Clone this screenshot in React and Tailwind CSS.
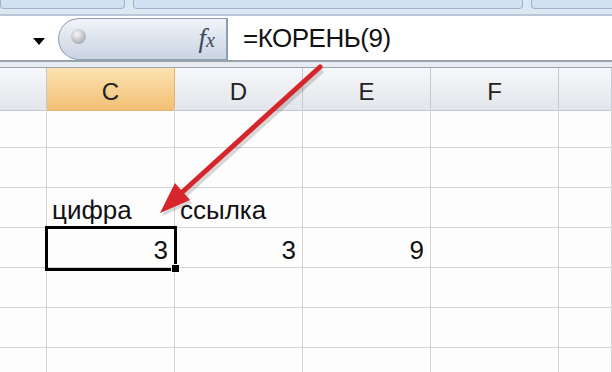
import React from "react";

const cols = ["B", "C", "D", "E", "F", "G"];

const rows = [
  ["", "", "", "", "", ""],
  ["", "", "", "", "", ""],
  ["", "цифра", "ссылка", "", "", ""],
  ["", "3", "3", "9", "", ""],
  ["", "", "", "", "", ""],
  ["", "", "", "", "", ""],
  ["", "", "", "", "", ""],
];

const Cell = ({ value }) => {
  const isNum = value !== "" && !isNaN(Number(value));
  return (
    <div
      className={
        "h-[40px] border-r border-b border-[#d4d4d4] flex items-end pb-[4px] text-[26px] leading-none text-[#111] overflow-visible whitespace-nowrap " +
        (isNum ? "justify-end pr-[6px]" : "justify-start pl-[5px]")
      }
    >
      {value}
    </div>
  );
};

const App = () => {
  return (
    <div className="relative w-[612px] h-[372px] overflow-hidden bg-[#fdfdfd] font-['Liberation_Sans',Arial,sans-serif]">
      {/* top ribbon strip */}
      <div className="h-[16px] bg-[#dce7f4] flex gap-[8px] border-b-2 border-[#b8c6d8]">
        <div className="w-[125px] h-[9px] bg-[#d3e0f1] border border-t-0 border-[#9fb2ca] rounded-b-[4px]" />
        <div className="w-[390px] h-[9px] bg-[#d3e0f1] border border-t-0 border-[#9fb2ca] rounded-b-[4px]" />
        <div className="flex-1 h-[9px] bg-[#d3e0f1] border border-t-0 border-r-0 border-[#9fb2ca] rounded-bl-[4px]" />
      </div>

      {/* formula bar */}
      <div className="h-[46px] flex bg-white border-b-2 border-[#98a3b0]">
        <div className="w-[58px] flex items-center justify-end pr-[13px] pt-[6px]">
          <div className="w-0 h-0 border-l-[6px] border-r-[6px] border-t-[7px] border-l-transparent border-r-transparent border-t-black" />
        </div>
        <div className="w-[170px] mt-[2px] flex items-center justify-between pl-[12px] pr-[11px] rounded-l-[22px] border border-r-2 border-[#8e9db2] bg-linear-to-b from-[#f1f4f9] to-[#c9d4e3]">
          <div className="w-[15px] h-[15px] -mt-[6px] rounded-full bg-[radial-gradient(circle_at_40%_35%,#f6f6f6,#8f9398)]" />
          <span className="font-['Liberation_Serif',serif] italic text-[27px] text-[#3d4a5c] leading-none -mt-[2px]">
            f<span className="text-[20px]">x</span>
          </span>
        </div>
        <div className="flex-1 flex items-center pl-[15px] text-[26px] text-[#111] tracking-[-0.5px]">
          =КОРЕНЬ(9)
        </div>
      </div>

      {/* band */}
      <div className="h-[6px] bg-[#e8ecf1] border-b border-[#9aa5b2]" />

      {/* column headers */}
      <div className="grid grid-cols-[47px_128px_128px_128px_128px_1fr] h-[40px]">
        {cols.map((c, i) => (
          <div
            key={c}
            className={
              "flex items-center justify-center pt-[6px] text-[24px] text-[#222] border-r border-b " +
              (c === "C"
                ? "bg-linear-to-b from-[#fbe2b0] to-[#f2c073] border-[#e0b36e]"
                : "bg-linear-to-b from-[#f7f8fa] to-[#e2e5ea] border-[#c3c9d1]")
            }
          >
            {i === 0 || i === 5 ? "" : c}
          </div>
        ))}
      </div>

      {/* cells */}
      <div className="grid grid-cols-[47px_128px_128px_128px_128px_1fr]">
        {rows.map((r, ri) =>
          r.map((v, ci) => <Cell key={ri + "-" + ci} value={v} />)
        )}
      </div>

      {/* active cell */}
      <div className="absolute left-[45px] top-[226px] w-[132px] h-[45px] border-[3px] border-black pointer-events-none" />
      <div className="absolute left-[171px] top-[264px] w-[9px] h-[9px] bg-black border border-white" />

      {/* arrow */}
      <svg className="absolute inset-0 pointer-events-none" width="612" height="372">
        <line x1="320" y1="68" x2="178" y2="197" stroke="#000" strokeOpacity="0.15" strokeWidth="6" transform="translate(2,2)" />
        <polygon points="160,214 190,201 175,184" fill="#000" fillOpacity="0.15" transform="translate(2,2)" />
        <line x1="320" y1="67" x2="178" y2="196" stroke="#d7262b" strokeWidth="5" strokeLinecap="round" />
        <polygon points="160,213 190,200 175,183" fill="#d7262b" />
      </svg>
    </div>
  );
};

export default App;
